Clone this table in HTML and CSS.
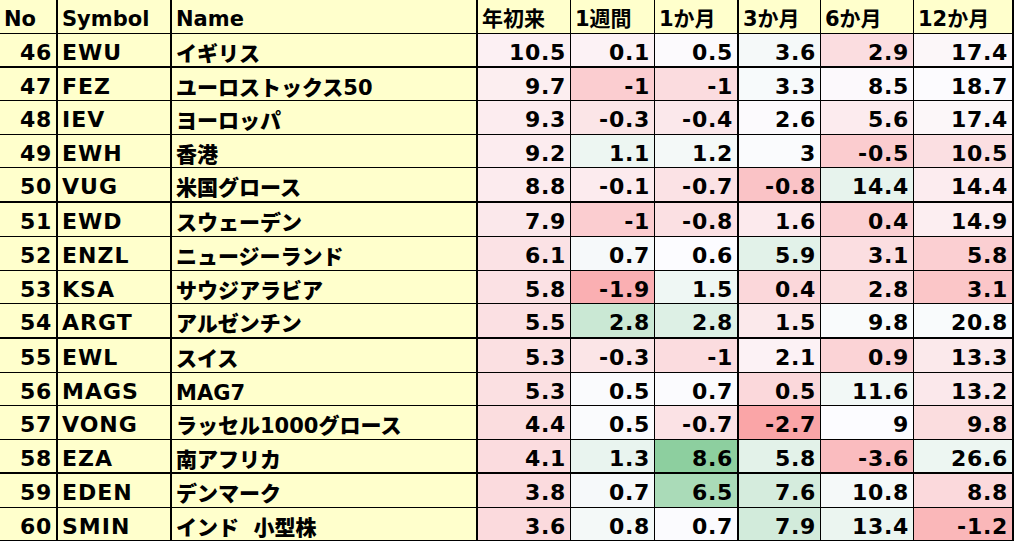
FILE: index.html
```html
<!DOCTYPE html>
<html lang="ja">
<head>
<meta charset="utf-8">
<title>ETF Performance</title>
<link rel="stylesheet" href="styles.css">
</head>
<body>
<div class="sheet" id="sheet">
  <div class="row head">
    <div class="cell c1">No</div>
    <div class="cell c2">Symbol</div>
    <div class="cell c3">Name</div>
    <div class="cell c4">年初来</div>
    <div class="cell c5">1週間</div>
    <div class="cell c6">1か月</div>
    <div class="cell c7">3か月</div>
    <div class="cell c8">6か月</div>
    <div class="cell c9">12か月</div>
  </div>
</div>
<script src="script.js"></script>
</body>
</html>
```

FILE: styles.css
```css
html, body {
  margin: 0;
  padding: 0;
  background: #ffffff;
}

.sheet {
  display: grid;
  width: 1014px;
  grid-template-columns: 58px 114px 306px 93px 84px 84px 82px 93px 100px;
  grid-template-rows: 34px 34px 33px 34px 33px 35px 34px 34px 33px 35px 34px 33px 34px 34px 34px 33px;
  font-family: "DejaVu Sans", "Noto Sans CJK JP", sans-serif;
  font-weight: bold;
  color: #000000;
}

.row {
  display: contents;
}

.cell {
  box-sizing: border-box;
  background: #ffffcc;
  border-right: 1px solid #000000;
  border-bottom: 1px solid #000000;
  white-space: nowrap;
  overflow: hidden;
  font-size: 22px;
  line-height: 24px;
  padding-top: 7px;
}

.c1, .c2, .c3, .c6, .c9 {
  border-right-width: 2px;
}

.thick .cell {
  border-bottom-width: 2px;
}

.head .cell {
  font-size: 21px;
  line-height: 24px;
  letter-spacing: 0;
  padding: 7px 0 0 4px;
  text-align: left;
}

.num {
  text-align: right;
  letter-spacing: 0.7px;
  padding-right: 4px;
}

.sym {
  letter-spacing: 1px;
  padding-left: 4px;
}

.name {
  font-size: 21px;
  font-weight: 900;
  padding-left: 4px;
  padding-top: 8px;
}
```

FILE: script.js
```javascript
(function () {
  var rows = [
    [46, 'EWU', 'イギリス', 10.5, 0.1, 0.5, 3.6, 2.9, 17.4],
    [47, 'FEZ', 'ユーロストックス50', 9.7, -1, -1, 3.3, 8.5, 18.7],
    [48, 'IEV', 'ヨーロッパ', 9.3, -0.3, -0.4, 2.6, 5.6, 17.4],
    [49, 'EWH', '香港', 9.2, 1.1, 1.2, 3, -0.5, 10.5],
    [50, 'VUG', '米国グロース', 8.8, -0.1, -0.7, -0.8, 14.4, 14.4],
    [51, 'EWD', 'スウェーデン', 7.9, -1, -0.8, 1.6, 0.4, 14.9],
    [52, 'ENZL', 'ニュージーランド', 6.1, 0.7, 0.6, 5.9, 3.1, 5.8],
    [53, 'KSA', 'サウジアラビア', 5.8, -1.9, 1.5, 0.4, 2.8, 3.1],
    [54, 'ARGT', 'アルゼンチン', 5.5, 2.8, 2.8, 1.5, 9.8, 20.8],
    [55, 'EWL', 'スイス', 5.3, -0.3, -1, 2.1, 0.9, 13.3],
    [56, 'MAGS', 'MAG7', 5.3, 0.5, 0.7, 0.5, 11.6, 13.2],
    [57, 'VONG', 'ラッセル1000グロース', 4.4, 0.5, -0.7, -2.7, 9, 9.8],
    [58, 'EZA', '南アフリカ', 4.1, 1.3, 8.6, 5.8, -3.6, 26.6],
    [59, 'EDEN', 'デンマーク', 3.8, 0.7, 6.5, 7.6, 10.8, 8.8],
    [60, 'SMIN', 'インド\u00a0\u00a0小型株', 3.6, 0.8, 0.7, 7.9, 13.4, -1.2]
  ];
  var scales = [
    [-32, 14.25, 60],
    [-4, 0.4, 7.7],
    [-6.7, 0.6, 11.6],
    [-6.4, 2.7, 21.7],
    [-20, 9, 48],
    [-24, 19, 99]
  ];
  var W = [252, 252, 255], R = [248, 105, 107], G = [99, 190, 123];
  function color(v, s) {
    var t, E;
    if (v < s[1]) { t = Math.min(1, (s[1] - v) / (s[1] - s[0])); E = R; }
    else { t = Math.min(1, (v - s[1]) / (s[2] - s[1])); E = G; }
    var c = [];
    for (var i = 0; i < 3; i++) c.push(Math.round(W[i] + (E[i] - W[i]) * t));
    return 'rgb(' + c.join(',') + ')';
  }
  var sheet = document.getElementById('sheet');
  rows.forEach(function (r, idx) {
    var row = document.createElement('div');
    row.className = 'row' + (idx % 4 === 0 ? ' thick' : '');
    var html = '';
    html += '<div class="cell c1 num">' + r[0] + '</div>';
    html += '<div class="cell c2 sym">' + r[1] + '</div>';
    html += '<div class="cell c3 name">' + r[2] + '</div>';
    for (var k = 0; k < 6; k++) {
      html += '<div class="cell c' + (k + 4) + ' num" style="background:' + color(r[k + 3], scales[k]) + '">' + r[k + 3] + '</div>';
    }
    row.innerHTML = html;
    sheet.appendChild(row);
  });
})();
```
